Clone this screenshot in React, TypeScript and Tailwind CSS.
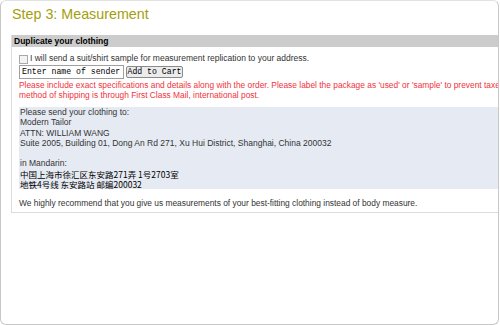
export default function App() {
  return (
    <div className="w-[500px] h-[325px] bg-white overflow-hidden font-['Liberation_Sans',Arial,sans-serif]">
      <div className="w-[499px] h-[325px] border border-[#c8c8c8] border-t-[#e2e2e2] rounded-[6px] overflow-hidden">
        {/* Title */}
        <h2 className="pl-[11px] pt-[5px] h-[34px] text-[14.3px] leading-[17px] text-[#a39e0c]">
          Step 3: Measurement
        </h2>

        {/* Duplicate section */}
        <div className="ml-[10px] border-l border-b border-[#dcdcdc] pb-[4px]">
          <div className="h-[12px] bg-[#cccccc] pl-[2px] text-[8.5px] leading-[12px] font-bold text-black">
            Duplicate your clothing
          </div>

          <div className="pl-[7px] text-[8.5px] text-[#333]">
            <label className="flex items-center gap-[2px] mt-[7px] h-[9px] leading-[9px]">
              <span className="w-[9px] h-[9px] mt-[1px] border border-[#a9a9a9] bg-[#f3f3f3] shrink-0" />
              <span>
                I will send a suit/shirt sample for measurement replication to your address.
              </span>
            </label>

            <div className="flex items-start mt-[2px] h-[14px]">
              <div className="w-[105px] h-[14px] border border-[#a0a0a0] bg-white pl-[2px] font-['Liberation_Mono',monospace] text-[8.2px] leading-[12px] text-black whitespace-nowrap overflow-hidden">
                Enter name of sender
              </div>
              <div className="ml-[2px] mt-[1px] w-[57px] h-[12px] border border-[#8a8a8a] rounded-[2px] bg-[#ececec] font-['Liberation_Mono',monospace] text-[8.2px] leading-[10px] text-black text-center whitespace-nowrap">
                Add to Cart
              </div>
            </div>

            <div className="mt-[1px] text-[#f0333c] text-[8.4px] leading-[10px] whitespace-nowrap">
              <div>
                Please include exact specifications and details along with the order. Please label the package as 'used' or 'sample' to prevent taxes. The
              </div>
              <div>method of shipping is through First Class Mail, international post.</div>
            </div>

            <div className="mt-[7px] bg-[#e6ebf3] leading-[10.3px] pl-px whitespace-nowrap">
              <div>Please send your clothing to:</div>
              <div>Modern Tailor</div>
              <div>ATTN: WILLIAM WANG</div>
              <div>Suite 2005, Building 01, Dong An Rd 271, Xu Hui District, Shanghai, China 200032</div>
              <div>&nbsp;</div>
              <div>in Mandarin:</div>
              <div className="h-[10.3px] font-['Noto_Sans_CJK_SC',sans-serif] text-black">中国上海市徐汇区东安路271弄 1号2703室</div>
              <div className="h-[10.3px] font-['Noto_Sans_CJK_SC',sans-serif] text-black">地铁4号线 东安路站 邮编200032</div>
            </div>

            <div className="mt-[9px] leading-[10px] text-[8.4px] whitespace-nowrap">
              We highly recommend that you give us measurements of your best-fitting clothing instead of body measure.
            </div>
          </div>
        </div>
      </div>
    </div>
  );
}
